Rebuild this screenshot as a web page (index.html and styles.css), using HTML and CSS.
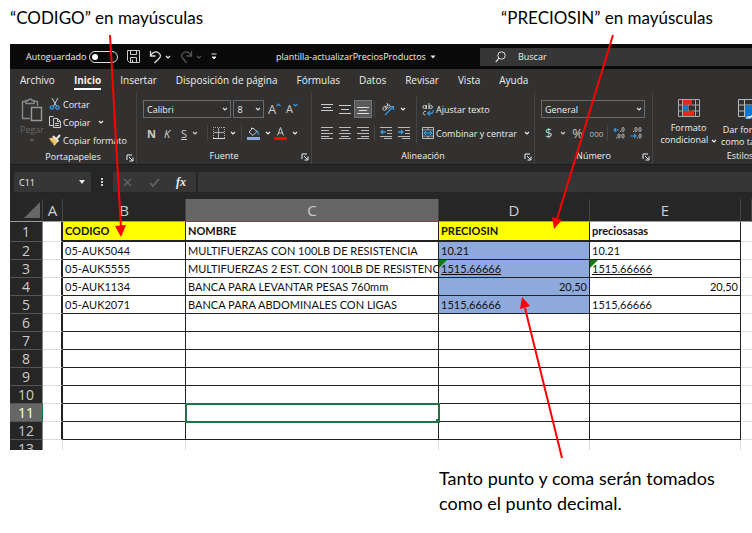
FILE: index.html
```html
<!DOCTYPE html>
<html lang="es">
<head>
<meta charset="utf-8">
<meta name="viewport" content="width=device-width, initial-scale=1">
<title>plantilla-actualizarPreciosProductos</title>
<link rel="stylesheet" href="styles.css">
</head>
<body>
<svg class="defs" width="0" height="0" aria-hidden="true">
  <symbol id="chev" viewBox="0 0 6 6"><path d="M1 2l2 2 2-2" fill="none" stroke="currentColor" stroke-width="1.2"/></symbol>
  <symbol id="launch" viewBox="0 0 8 8"><path d="M1 6V1h5M3 3l3.500 3.500M7 3.500V7H3.500" fill="none" stroke="currentColor"/></symbol>
</svg>
<main class="page">
  <div class="notes">
    <p class="note">“CODIGO” en mayúsculas</p>
    <p class="note note-right">“PRECIOSIN” en mayúsculas</p>
  </div>

  <section class="app">
    <header class="titlebar">
      <label class="autosave" for="autosave">Autoguardado</label>
      <input class="switch" type="checkbox" id="autosave">
      <div class="quick">
        <button class="tool" aria-label="Guardar"><svg width="13" height="13" viewBox="0 0 13 13"><path d="M.5.5h12v12h-10l-2-2zM3.500.5v4h6v-4M3.500 12.500v-5h6v5M5.500 12V9.500" fill="none" stroke="#ccc"/></svg></button>
        <button class="tool" aria-label="Deshacer"><svg width="13" height="14" viewBox="0 0 13 14"><path d="M1.500 1v5h5M1.500 6C4 2 7 1.500 9 2.500c3 1.500 3 4 1 6L5.500 13" fill="none" stroke="#ddd" stroke-width="1.300"/></svg><svg width="6" height="6"><use href="#chev"/></svg></button>
        <button class="tool dim" aria-label="Rehacer"><svg width="13" height="14" viewBox="0 0 13 14"><path d="M11.500 1v5h-5M11.500 6C9 2 6 1.500 4 2.500c-3 1.500-3 4-1 6L6.500 13" fill="none" stroke="currentColor" stroke-width="1.300"/></svg><svg width="6" height="6"><use href="#chev"/></svg></button>
        <button class="tool" aria-label="Personalizar"><svg width="6" height="8" viewBox="0 0 6 8"><path d="M.5 1h5M1 4h4L3 6z" fill="#ddd" stroke="#ddd"/></svg></button>
      </div>
      <button class="docname">plantilla-actualizarPreciosProductos <svg width="6" height="4" viewBox="0 0 6 4"><path d="M.5.5h5L3 3.500z" fill="#eee"/></svg></button>
      <label class="search"><svg width="11" height="12" viewBox="0 0 11 12"><circle cx="6.500" cy="4.500" r="3.700" fill="none" stroke="#ddd"/><path d="M4 7.200L.8 11" stroke="#ddd" stroke-width="1.200"/></svg><input type="search" placeholder="Buscar" aria-label="Buscar"></label>
    </header>

    <nav class="tabs">
      <a href="#archivo">Archivo</a><a class="active" href="#inicio">Inicio</a><a href="#insertar">Insertar</a><a href="#disposicion">Disposición de página</a><a href="#formulas">Fórmulas</a><a href="#datos">Datos</a><a href="#revisar">Revisar</a><a href="#vista">Vista</a><a href="#ayuda">Ayuda</a>
    </nav>

    <div class="ribbon">
      <section class="group g-clip">
        <div class="tools clip">
          <button class="paste"><svg width="22" height="24" viewBox="0 0 22 24"><path d="M9 20.500H1.500v-17H5M13 3.500h3.500V8M5 5.500v-3h2.500c.5-2 3-2 3.500 0H13v3z" fill="none" stroke="#8a8a8a" stroke-width="1.400"/><path d="M10.500 9.500h10v13h-10z" fill="#323130" stroke="#999" stroke-width="1.400"/></svg><span>Pegar</span><svg width="6" height="6"><use href="#chev"/></svg></button>
          <div class="cliplist">
            <button class="tool"><svg width="12" height="12" viewBox="0 0 12 12"><path d="M3 0l4.500 8M9 0L4.500 8" stroke="#ccc" fill="none"/><circle cx="3" cy="9.500" r="1.700" fill="none" stroke="#3a96dd" stroke-width="1.300"/><circle cx="8.500" cy="9.500" r="1.700" fill="none" stroke="#3a96dd" stroke-width="1.300"/></svg>Cortar</button>
            <button class="tool"><svg width="12" height="12" viewBox="0 0 12 12"><path d="M4 9.500H.5v-9h4M4.500 2.500h4l3 3v6h-7zM8.500 2.500v3h3M6 7.500h4M6 9.500h4" fill="none" stroke="#ccc"/></svg>Copiar<svg class="chev wide" width="6" height="6"><use href="#chev"/></svg></button>
            <button class="tool"><svg width="12" height="12" viewBox="0 0 12 12"><path d="M0 4.500l5-1.500 4 4.500L5.500 12z" fill="#f3c565"/><path d="M1.500 7l3.500 2.500" stroke="#b98a2e"/><path d="M4 2l5.500 5.500M7.500 5L11 1" fill="none" stroke="#e4e4e4" stroke-width="2"/></svg>Copiar formato</button>
          </div>
        </div>
        <footer>Portapapeles<button class="launch" aria-label="Opciones de portapapeles"><svg width="8" height="8"><use href="#launch"/></svg></button></footer>
      </section>

      <section class="group g-font">
        <div class="tools">
          <div class="row">
            <select class="font" aria-label="Fuente"><option>Calibri</option></select>
            <select class="size" aria-label="Tamaño"><option>8</option></select>
            <button class="tool grow" aria-label="Aumentar tamaño">A<svg width="5" height="4" viewBox="0 0 5 4"><path d="M.5 3l2-2 2 2" fill="none" stroke="#3a96dd" stroke-width="1.200"/></svg></button>
            <button class="tool grow small" aria-label="Reducir tamaño">A<svg width="5" height="4" viewBox="0 0 5 4"><path d="M.5 1l2 2 2-2" fill="none" stroke="#3a96dd" stroke-width="1.200"/></svg></button>
          </div>
          <div class="row">
            <button class="tool glyph bold">N</button>
            <button class="tool glyph italic">K</button>
            <button class="tool glyph under"><u>S</u><svg class="chev" width="6" height="6"><use href="#chev"/></svg></button>
            <i class="sep"></i>
            <button class="tool drop" aria-label="Bordes"><svg width="12" height="12" viewBox="0 0 12 12"><path d="M.5 0v11M11.500 0v11M0 .5h12" fill="none" stroke="#aaa" stroke-dasharray="1 1"/><path d="M0 11.500h12" stroke="#ddd"/><path d="M5.500 1v10M1 5.500h10" stroke="#aaa"/></svg><svg class="chev" width="6" height="6"><use href="#chev"/></svg></button>
            <i class="sep"></i>
            <button class="tool drop" aria-label="Color de relleno"><svg width="13" height="13" viewBox="0 0 13 13"><path d="M6 1L2 5l4 3.500 4-4zM4.500 3V.5" fill="none" stroke="#ccc"/><path d="M9.500 3.500c2 1 2 3 1.500 4.500" fill="none" stroke="#3a96dd" stroke-width="1.300"/><path d="M0 10h13v3H0z" fill="#8ea9db"/></svg><svg class="chev" width="6" height="6"><use href="#chev"/></svg></button>
            <button class="tool drop" aria-label="Color de fuente"><svg width="13" height="13" viewBox="0 0 13 13"><path d="M3.500 8.500l3-8 3 8M4.500 6h4" fill="none" stroke="#ccc"/><path d="M0 10h13v3H0z" fill="#f00"/></svg><svg class="chev" width="6" height="6"><use href="#chev"/></svg></button>
          </div>
        </div>
        <footer>Fuente<button class="launch" aria-label="Opciones de fuente"><svg width="8" height="8"><use href="#launch"/></svg></button></footer>
      </section>

      <section class="group g-align">
        <div class="tools split">
          <div class="aligns">
            <div class="row">
              <button class="tool ic" aria-label="Arriba"><svg width="12" height="12" viewBox="0 0 12 12"><path d="M0 1.500h12M2 4.500h8M0 7.500h12" stroke="#ccc"/></svg></button>
              <button class="tool ic" aria-label="Medio"><svg width="12" height="12" viewBox="0 0 12 12"><path d="M0 2.500h12M2 6.500h8M0 10.500h12" stroke="#ccc"/></svg></button>
              <button class="tool ic pressed" aria-label="Abajo"><svg width="12" height="12" viewBox="0 0 12 12"><path d="M0 4.500h12M2 7.500h8M0 10.500h12" stroke="#ddd"/></svg></button>
              <i class="sep"></i>
              <button class="tool drop orient" aria-label="Orientación"><svg width="13" height="12" viewBox="0 0 13 12"><path d="M3 12l8-8M11.500 7V3.500H8" fill="none" stroke="#3a96dd" stroke-width="1.200"/><circle cx="2.500" cy="5.500" r="1.700" fill="none" stroke="#ccc"/><circle cx="6.500" cy="3.500" r="1.600" fill="none" stroke="#ccc"/><path d="M3 2.500l2 4M5 0l1 3" stroke="#ccc"/></svg><svg class="chev" width="6" height="6"><use href="#chev"/></svg></button>
            </div>
            <div class="row">
              <button class="tool ic" aria-label="Izquierda"><svg width="12" height="12" viewBox="0 0 12 12"><path d="M0 .5h12M0 3.500h8M0 6.500h12M0 9.500h8M0 11.500h12" stroke="#bbb"/></svg></button>
              <button class="tool ic" aria-label="Centro"><svg width="12" height="12" viewBox="0 0 12 12"><path d="M0 .5h12M2 3.500h8M0 6.500h12M2 9.500h8M0 11.500h12" stroke="#bbb"/></svg></button>
              <button class="tool ic" aria-label="Derecha"><svg width="12" height="12" viewBox="0 0 12 12"><path d="M0 .5h12M4 3.500h8M0 6.500h12M4 9.500h8M0 11.500h12" stroke="#bbb"/></svg></button>
              <i class="sep"></i>
              <button class="tool ic" aria-label="Disminuir sangría"><svg width="12" height="12" viewBox="0 0 12 12"><path d="M0 .5h12M7 3.500h5M7 6.500h5M0 9.500h12M4 11.500h8" stroke="#bbb"/><path d="M6 5H1m2-2L1 5l2 2" fill="none" stroke="#3a96dd" stroke-width="1.300"/></svg></button>
              <button class="tool ic" aria-label="Aumentar sangría"><svg width="12" height="12" viewBox="0 0 12 12"><path d="M0 .5h12M7 3.500h5M7 6.500h5M0 9.500h12M4 11.500h8" stroke="#bbb"/><path d="M0 5h5M3 3l2 2-2 2" fill="none" stroke="#3a96dd" stroke-width="1.300"/></svg></button>
            </div>
          </div>
          <div class="wraps">
            <button class="tool"><svg width="12" height="13" viewBox="0 0 12 13"><circle cx="2.500" cy="4" r="1.600" fill="none" stroke="#ccc"/><path d="M4.500 2v4M7 0v6M4 8.500c-3-1-4 3.500-.5 3.500" fill="none" stroke="#ccc"/><circle cx="8.700" cy="4" r="1.600" fill="none" stroke="#ccc"/><path d="M11 7c1 3-1 3.500-5 3.500M8 8l-2.500 2.500L8 12.500" fill="none" stroke="#3a96dd" stroke-width="1.200"/></svg>Ajustar texto</button>
            <button class="tool"><svg width="12" height="12" viewBox="0 0 12 12"><path d="M.5.5h11v11H.5zM6 0v3M6 9v3M0 3h12M0 9h12" fill="none" stroke="#bbb"/><path d="M1 3.500h10v5H1z" fill="#1b4766"/><path d="M2 6h8M4 4L2 6l2 2M8 4l2 2-2 2" fill="none" stroke="#4aa5e8"/></svg>Combinar y centrar<svg class="chev wide" width="6" height="6"><use href="#chev"/></svg></button>
          </div>
        </div>
        <footer>Alineación<button class="launch" aria-label="Opciones de alineación"><svg width="8" height="8"><use href="#launch"/></svg></button></footer>
      </section>

      <section class="group g-num">
        <div class="tools">
          <div class="row"><select class="format" aria-label="Formato de número"><option>General</option></select></div>
          <div class="row nums">
            <button class="tool cur">$<svg class="chev wide" width="6" height="6"><use href="#chev"/></svg></button>
            <button class="tool pct">%</button>
            <button class="tool mil">000</button>
            <i class="sep"></i>
            <button class="tool ic" aria-label="Aumentar decimales"><svg width="12" height="12" viewBox="0 0 12 12"><path d="M6 3H1m2-2L1 3l2 2" fill="none" stroke="#3a96dd" stroke-width="1.200"/><rect x="9" y=".5" width="2" height="4" rx="1" fill="none" stroke="#bbb"/><rect x="5" y="7" width="2" height="4" rx="1" fill="none" stroke="#bbb"/><rect x="9" y="7" width="2" height="4" rx="1" fill="none" stroke="#bbb"/><path d="M3 11h1M7 4.500h1" stroke="#bbb"/></svg></button>
            <button class="tool ic" aria-label="Disminuir decimales"><svg width="12" height="12" viewBox="0 0 12 12"><path d="M0 9h6M4 7l2 2-2 2" fill="none" stroke="#3a96dd" stroke-width="1.200"/><rect x="5" y=".5" width="2" height="4" rx="1" fill="none" stroke="#bbb"/><rect x="9" y=".5" width="2" height="4" rx="1" fill="none" stroke="#bbb"/><rect x="9" y="7" width="2" height="4" rx="1" fill="none" stroke="#bbb"/><path d="M3 4.500h1M7 11h1" stroke="#bbb"/></svg></button>
          </div>
        </div>
        <footer>Número<button class="launch" aria-label="Opciones de número"><svg width="8" height="8"><use href="#launch"/></svg></button></footer>
      </section>

      <section class="group g-style">
        <div class="tools styles">
          <button class="big"><svg width="22" height="18" viewBox="0 0 22 18"><path d="M.5.5h21v17H.5zM0 6h22M0 12h22M4.500 0v18M17.500 0v18M11 0v18" fill="none" stroke="#aaa"/><path d="M5 1h9v4.500H5zM5 12h11v5H5z" fill="#e8261c"/><path d="M5 6.500h5v5H5z" fill="#1077d1"/><path d="M11 6.500h3v5h-3z" fill="#323130"/></svg><span>Formato<br>condicional <svg width="6" height="6"><use href="#chev"/></svg></span></button>
          <button class="big"><svg width="22" height="20" viewBox="0 0 22 20"><path d="M.5.5h21v17H.5zM0 6h22M0 12h22M6.500 0v18M14.500 0v18" fill="none" stroke="#bbb"/><path d="M7 6.500h14v11H7z" fill="#1077d1"/><path d="M20 9l-8 8c-1-1-4 0-5 3h5l3-2z" fill="#ddd" stroke="#1077d1"/></svg><span>Dar formato<br>como tabla <svg width="6" height="6"><use href="#chev"/></svg></span></button>
        </div>
        <footer>Estilos</footer>
      </section>
    </div>

    <div class="formulabar">
      <div class="namebox"><input value="C11" aria-label="Cuadro de nombres"><svg width="6" height="4" viewBox="0 0 6 4"><path d="M0 0h6L3 4z" fill="#eee"/></svg></div>
      <svg class="dots" width="2" height="8" viewBox="0 0 2 8"><path d="M0 0h2v2H0zM0 3h2v2H0zM0 6h2v2H0z" fill="#ccc"/></svg>
      <div class="fxbox">
        <button class="tool" aria-label="Cancelar"><svg width="9" height="9" viewBox="0 0 9 9"><path d="M1 1l7 7M8 1L1 8" stroke="#666" stroke-width="1.200"/></svg></button>
        <button class="tool" aria-label="Introducir"><svg width="11" height="9" viewBox="0 0 11 9"><path d="M1 5l3 3 6-7" fill="none" stroke="#666" stroke-width="1.600"/></svg></button>
        <button class="tool fx">fx</button>
      </div>
      <input class="formula" aria-label="Barra de fórmulas">
    </div>

    <div class="sheet">
      <table>
        <colgroup><col class="c-h"><col class="c-a"><col class="c-b"><col class="c-c"><col class="c-d"><col class="c-e"><col></colgroup>
        <thead><tr><th class="corner"><svg width="16" height="16" viewBox="0 0 16 16"><path d="M16 0v16H0z" fill="#666"/></svg></th><th>A</th><th>B</th><th class="sel">C</th><th>D</th><th>E</th><th></th></tr></thead>
        <tbody>
          <tr class="titles"><th>1</th><td></td><td class="yellow">CODIGO</td><td>NOMBRE</td><td class="yellow">PRECIOSIN</td><td>preciosasas</td><td></td></tr>
          <tr><th>2</th><td></td><td>05-AUK5044</td><td>MULTIFUERZAS CON 100LB DE RESISTENCIA</td><td class="blue">10.21</td><td>10.21</td><td></td></tr>
          <tr><th>3</th><td></td><td>05-AUK5555</td><td>MULTIFUERZAS 2 EST. CON 100LB DE RESISTENC</td><td class="blue flag"><u>1515.66666</u></td><td class="flag"><u>1515.66666</u></td><td></td></tr>
          <tr><th>4</th><td></td><td>05-AUK1134</td><td>BANCA PARA LEVANTAR PESAS 760mm</td><td class="blue num">20,50</td><td class="num">20,50</td><td></td></tr>
          <tr><th>5</th><td></td><td>05-AUK2071</td><td>BANCA PARA ABDOMINALES CON LIGAS</td><td class="blue">1515,66666</td><td>1515,66666</td><td></td></tr>
          <tr><th>6</th><td></td><td></td><td></td><td></td><td></td><td></td></tr>
          <tr><th>7</th><td></td><td></td><td></td><td></td><td></td><td></td></tr>
          <tr><th>8</th><td></td><td></td><td></td><td></td><td></td><td></td></tr>
          <tr><th>9</th><td></td><td></td><td></td><td></td><td></td><td></td></tr>
          <tr><th>10</th><td></td><td></td><td></td><td></td><td></td><td></td></tr>
          <tr><th class="sel">11</th><td></td><td></td><td class="current"></td><td></td><td></td><td></td></tr>
          <tr><th>12</th><td></td><td></td><td></td><td></td><td></td><td></td></tr>
          <tr class="beyond"><th>13</th><td></td><td></td><td></td><td></td><td></td><td></td></tr>
        </tbody>
      </table>
    </div>
  </section>

  <p class="note note-bottom">Tanto punto y coma serán tomados<br>como el punto decimal.</p>

  <svg class="arrows" width="752" height="533" viewBox="0 0 752 533" aria-hidden="true">
    <g stroke="#f00" stroke-width="2"><path d="M110 35l11 193M613 35l-56 184M562 458l-37-150"/></g>
    <g fill="#f00"><path d="M121 237l-6-11 11-1zM554 229l-2-12 10 3zM522 297l8 9-10 3z"/></g>
  </svg>
</main>
</body>
</html>
```
FILE: styles.css
```css
* { box-sizing: border-box; }
body { margin: 0; background: #fff; overflow: hidden; }
.page { position: relative; font-family: Lato, sans-serif; color: #000; }
.defs { position: absolute; }
.arrows { position: absolute; left: 0; top: 0; pointer-events: none; }

.notes { display: grid; grid-template-columns: 491px 1fr; height: 44px; padding: 5px 0 0 10px; }
.note { margin: 0; font-size: 17px; line-height: 25px; white-space: nowrap; }
.note-bottom { padding: 16px 0 0 439px; font-size: 18px; }

.app { margin-left: 10px; height: 406px; overflow: hidden; background: #262626; color: #eee; font-family: "Open Sans", sans-serif; font-size: 10px; display: flex; flex-direction: column; }
button, input, select { font: inherit; color: inherit; margin: 0; padding: 0; border: 0; background: none; }
button { white-space: nowrap; }
svg { display: block; flex: none; }
.tool { display: flex; align-items: center; gap: 3px; }
.chev { margin-left: 2px; }
.chev.wide { margin-left: 5px; }

.titlebar { display: flex; align-items: center; height: 25px; flex: none; padding-left: 16px; background: #0a0a0a; }
.autosave { width: 58px; font-size: 9px; white-space: nowrap; }
.switch { appearance: none; width: 29px; height: 12px; margin-left: 5px; border: 1px solid #ddd; border-radius: 6px; }
.switch::before { content: ""; display: block; width: 6px; height: 6px; margin: 2px; border-radius: 3px; background: #fff; }
.quick { display: flex; align-items: center; gap: 9px; margin-left: 9px; width: 149px; }
.dim { color: #555; }
.docname { display: flex; align-items: center; gap: 4px; width: 204px; font-size: 9px; }
.search { display: flex; align-items: center; gap: 12px; flex: 1; height: 18px; padding-left: 15px; background: #363636; font-size: 9px; }
.search input { flex: 1; min-width: 0; outline: 0; }
.search input::placeholder { color: #eee; opacity: 1; }

.tabs { display: flex; flex: none; gap: 19px; height: 23px; padding-left: 10px; background: #323130; }
.tabs a { height: 21px; line-height: 23px; color: #eee; text-decoration: none; white-space: nowrap; }
.tabs .active { font-weight: 700; border-bottom: 2px solid #fff; }

.ribbon { display: flex; flex: none; height: 73px; background: #323130; border-bottom: 1px solid #1c1c1c; overflow: hidden; }
.group { flex: none; display: flex; flex-direction: column; border-right: 1px solid #444; }
.g-clip { width: 127px; }
.g-font { width: 175px; }
.g-align { width: 223px; }
.g-num { width: 118px; }
.g-style { width: 174px; border: 0; }
.tools { flex: 1; padding: 5px 7px 0 6px; }
.group footer { position: relative; height: 16px; line-height: 16px; font-size: 9px; text-align: center; }
.launch { position: absolute; right: 2px; top: 5px; }
.row { display: flex; align-items: center; height: 24px; }
.sep { width: 1px; height: 16px; background: #484644; }
.clip { display: flex; gap: 4px; padding: 3px 0 0 9px; }
.paste { display: flex; flex-direction: column; align-items: center; padding-top: 3px; width: 26px; color: #666; font-size: 9px; }
.paste span { line-height: 15px; }
.cliplist { display: grid; grid-auto-rows: 18px; font-size: 9px; }
.cliplist .tool { gap: 2px; }

select { appearance: none; height: 18px; padding: 0 3px; font-size: 9px; border: 1px solid #6b6b6b; background: #323130 url("data:image/svg+xml,%3Csvg xmlns='http://www.w3.org/2000/svg' width='6' height='6'%3E%3Cpath d='M1 2l2 2 2-2' fill='none' stroke='%23ddd' stroke-width='1.2'/%3E%3C/svg%3E") no-repeat right 2px center; }
.font { width: 93px; }
.size { width: 32px; margin: 0 4px 0 2px; }
.format { width: 106px; }
.grow { width: 19px; gap: 0; font-size: 13px; align-items: flex-start; line-height: 16px; color: #ccc; }
.grow svg { margin-top: 2px; }
.small { font-size: 11px; }
.glyph { width: 18px; padding-left: 4px; font-size: 11px; color: #ccc; }
.bold { font-weight: 700; }
.italic { font-style: italic; }
.under { width: 32px; }
.drop { width: 35px; padding-left: 5px; }
.drop + .drop { width: 32px; padding-left: 0; }
.split { display: flex; padding: 5px 0 0 6px; }
.aligns { width: 99px; border-right: 1px solid #444; height: 48px; }
.aligns .sep { margin: 0 2px; }
.ic { width: 18px; height: 18px; justify-content: center; }
.pressed { background: #5a5a5a; outline: 1px solid #777; outline-offset: -1px; }
.wraps { display: grid; grid-auto-rows: 24px; padding-left: 5px; font-size: 9px; }
.wraps .tool { gap: 2px; }
.cur { width: 32px; padding-left: 4px; font-size: 13px; color: #ccc; }
.pct { width: 18px; font-size: 13px; color: #ccc; }
.mil { width: 17px; font-size: 8px; color: #bbb; }
.nums .sep { margin: 0 2px 0 1px; }
.styles { display: flex; gap: 5px; padding: 7px 0 0 8px; font-size: 9px; }
.big { display: flex; flex-direction: column; align-items: center; gap: 5px; width: 55px; height: 46px; line-height: 12px; }
.big span svg { display: inline-block; vertical-align: middle; }

.formulabar { display: flex; align-items: center; flex: none; height: 34px; padding-left: 4px; }
.namebox { display: flex; align-items: center; width: 77px; height: 20px; padding: 0 6px 0 5px; background: #363636; }
.namebox input { flex: 1; min-width: 0; font-size: 9px; }
.dots { margin: 0 10px; }
.fxbox { display: flex; align-items: center; justify-content: space-between; width: 83px; height: 20px; padding: 0 10px; background: #363636; }
.fx { font-family: "Liberation Serif", serif; font-style: italic; font-weight: 700; font-size: 12px; }
.formula { flex: 1; height: 20px; margin-left: 2px; background: #363636; }

.sheet { flex: 1; overflow: hidden; color: #111; }
table { width: 100%; table-layout: fixed; border-collapse: separate; border-spacing: 0; font-family: Lato, sans-serif; font-size: 11px; }
.c-h { width: 33px; }
.c-a { width: 20px; }
.c-b { width: 123px; }
.c-c { width: 253px; }
.c-d { width: 151px; }
.c-e { width: 151px; }
th, td { padding: 0; height: 18px; line-height: 16px; overflow: hidden; }
th { background: #262626; color: #ccc; font-family: "Open Sans", sans-serif; font-size: 14px; font-weight: 400; }
thead th { height: 23px; line-height: 22px; border-right: 1px solid #444; border-bottom: 1px solid #999; vertical-align: bottom; font-size: 15px; }
thead .sel { background: #666; border-bottom-color: #107c41; }
.corner svg { margin: 0 2px 3px auto; }
tbody th { border-bottom: 1px solid #555; border-right: 1px solid #888; }
tbody .sel { background: #666; border-right-color: #107c41; color: #fff; }
td { position: relative; background: #fff; text-align: left; white-space: nowrap; border-right: 1px solid #222; border-bottom: 1px solid #222; padding-left: 2px; }
td:nth-child(2) { border-bottom-color: #ddd; border-right-width: 2px; }
td:last-child { border-bottom-color: #ddd; border-right: 0; }
.titles td { height: 20px; font-weight: 700; border-bottom-width: 2px; }
.titles td:nth-child(2), .titles td:last-child { border-bottom-width: 1px; }
td.yellow { background: #ff0; }
td.blue { background: #8ea9db; }
td.num { text-align: right; padding-right: 2px; }
.flag::before { content: ""; position: absolute; left: 0; top: 0; border: 0 solid transparent; border-right-width: 8px; border-top: 8px solid #107c10; }
td.current { z-index: 1; outline: 2px solid #217346; outline-offset: -1px; overflow: visible; }
td.current::after { content: ""; position: absolute; right: -2px; bottom: -2px; width: 4px; height: 4px; background: #217346; }
.beyond td { border-color: #ddd; border-right-width: 1px; }
```
